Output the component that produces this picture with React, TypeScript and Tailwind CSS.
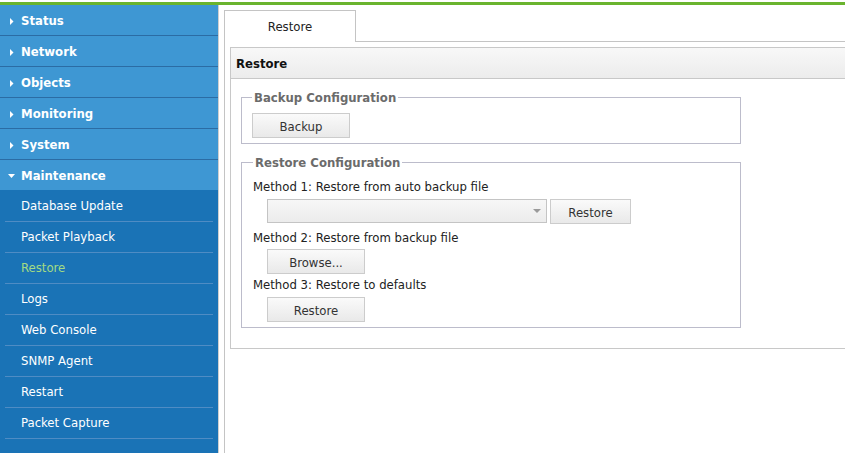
import React from "react";

const F = "font-['DejaVu_Sans_Condensed','DejaVu_Sans',sans-serif]";

const topItems = ["Status", "Network", "Objects", "Monitoring", "System"];
const subItems = [
  "Database Update",
  "Packet Playback",
  "Restore",
  "Logs",
  "Web Console",
  "SNMP Agent",
  "Restart",
  "Packet Capture",
];

function RightCaret() {
  return (
    <svg width="4" height="7" viewBox="0 0 4 7" className="ml-[10px] mr-[7px]">
      <path d="M0 0 L3.5 3.5 L0 7 Z" fill="#fff" />
    </svg>
  );
}

function DownCaret() {
  return (
    <svg width="7" height="4" viewBox="0 0 7 4" className="ml-[8px] mr-[6px]">
      <path d="M0 0 L7 0 L3.5 4 Z" fill="#fff" />
    </svg>
  );
}

function Btn({ label, w }: { label: string; w: string }) {
  return (
    <button
      className={`${w} h-[25px] pt-[2px] block border border-[#cccccc] bg-gradient-to-b from-[#fafafa] to-[#e9e9e9] text-[13px] text-[#333] leading-none`}
    >
      {label}
    </button>
  );
}

export default function App() {
  return (
    <div className={`w-[845px] h-[453px] overflow-hidden bg-white ${F}`}>
      <div className="h-[2px] bg-white" />
      <div className="h-[3px] bg-[#6ab42e]" />
      <div className="flex h-[448px]">
        {/* Sidebar */}
        <div className="w-[219px] shrink-0 border-r border-[#cfcfcf] bg-[#1a73b6] flex flex-col">
          {topItems.map((t) => (
            <div
              key={t}
              className="h-[31px] pt-[2px] flex items-center bg-[#3e97d3] border-b border-[#2b6ca4] text-white font-bold text-[13px]"
            >
              <RightCaret />
              <span>{t}</span>
            </div>
          ))}
          <div className="h-[30px] pt-[2px] flex items-center bg-[#3e97d3] text-white font-bold text-[13px]">
            <DownCaret />
            <span>Maintenance</span>
          </div>
          <div className="pt-[1px]">
            {subItems.map((s) => (
              <div
                key={s}
                className="mx-[5px] h-[31px] flex items-center border-b border-[#4f8cc4] pl-[16px] text-[13px]"
              >
                <span className={s === "Restore" ? "text-[#a3db84]" : "text-white"}>{s}</span>
              </div>
            ))}
          </div>
        </div>

        {/* Content */}
        <div className="flex-1 pl-[5px] pt-[5px]">
          <div className="h-full border-l border-[#c4c4c4]">
            <div className="flex h-[32px]">
              <div className="w-[131px] h-[32px] border-t border-r border-[#c4c4c4] bg-white flex items-center justify-center text-[13px] text-[#222]">
                Restore
              </div>
              <div className="flex-1 border-b border-[#c4c4c4]" />
            </div>

            <div className="ml-[5px] mt-[5px] border border-r-0 border-[#c8c8c8] pb-[20px]">
              <div className="h-[31px] pt-[2px] border-b border-[#c8c8c8] bg-gradient-to-b from-[#f8f8f8] to-[#ececec] flex items-center pl-[5px] font-bold text-[13px] text-[#111]">
                Restore
              </div>

              <fieldset className="ml-[10px] mt-[10px] w-[500px] border border-[#bcbccb] pb-[5px] min-w-0">
                <legend className="ml-[10px] px-[2px] h-[16px] pt-[1px] leading-[16px] font-bold text-[13px] text-[#6b6b6b]">
                  Backup Configuration
                </legend>
                <div className="pl-[10px] pt-[8px] flex">
                  <Btn label="Backup" w="w-[98px]" />
                </div>
              </fieldset>

              <fieldset className="ml-[10px] mt-[10px] w-[500px] border border-[#bcbccb] pb-[5px] min-w-0">
                <legend className="ml-[11px] px-[2px] h-[16px] pt-[1px] leading-[16px] font-bold text-[13px] text-[#6b6b6b]">
                  Restore Configuration
                </legend>
                <div className="pl-[11px] text-[13px] text-[#222]">
                  <div className="mt-[8px] h-[16px] pt-[1px] leading-[16px]">Method 1: Restore from auto backup file</div>
                  <div className="mt-[5px] flex items-start ml-[14px]">
                    <div className="w-[280px] h-[24px] border border-[#c4c4c4] bg-gradient-to-b from-[#f7f7f7] to-[#ececec] flex items-center justify-end pr-[5px]">
                      <svg width="8" height="4" viewBox="0 0 8 4">
                        <path d="M0 0 L8 0 L4 4 Z" fill="#9a9a9a" />
                      </svg>
                    </div>
                    <div className="ml-[3px] flex">
                      <Btn label="Restore" w="w-[81px]" />
                    </div>
                  </div>
                  <div className="mt-[5px] h-[16px] pt-[1px] leading-[16px]">Method 2: Restore from backup file</div>
                  <div className="mt-[4px] ml-[14px] flex">
                    <Btn label="Browse..." w="w-[98px]" />
                  </div>
                  <div className="mt-[2px] h-[16px] pt-[1px] leading-[16px]">Method 3: Restore to defaults</div>
                  <div className="mt-[5px] ml-[14px] flex">
                    <Btn label="Restore" w="w-[98px]" />
                  </div>
                </div>
              </fieldset>
            </div>
          </div>
        </div>
      </div>
    </div>
  );
}
